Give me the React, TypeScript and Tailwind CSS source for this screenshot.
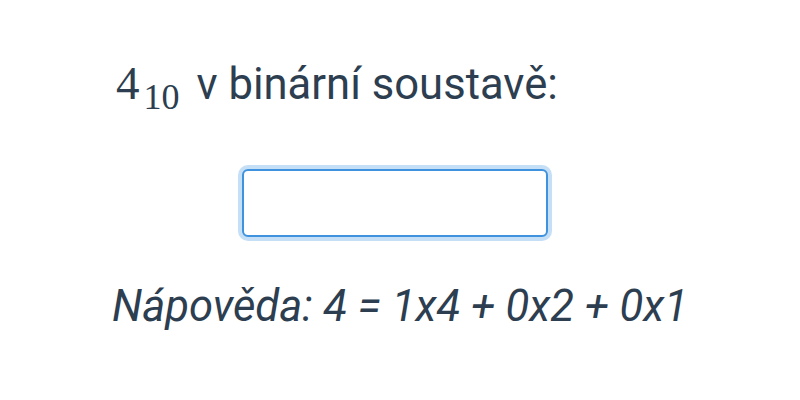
import React from "react";

export default function App() {
  return (
    <div className="w-[800px] h-[400px] bg-white text-[#2c3e50] font-['Roboto',sans-serif] overflow-hidden">
      <div className="mt-[57px] h-[56px] pl-[116px] text-[43.6px] leading-[56px] whitespace-nowrap">
        <span className="font-['Liberation_Serif',serif] text-[47px] leading-none">4</span>
        <span className="font-['Liberation_Serif',serif] text-[36px] leading-none align-[-10px] ml-[4px]">10</span>
        <span className="ml-[17px]">v binární soustavě:</span>
      </div>
      <div className="mt-[56px] pl-[242px]">
        <input
          type="text"
          aria-label="odpověď"
          className="block w-[306px] h-[68px] border-2 border-[#3f92de] rounded-[6px] bg-white outline-none shadow-[0_0_0_4px_rgba(110,176,236,0.4)]"
        />
      </div>
      <div className="mt-[42px] h-[56px] text-center text-[43.6px] leading-[56px] italic whitespace-nowrap">
        Nápověda: 4 = 1x4 + 0x2 + 0x1
      </div>
    </div>
  );
}
